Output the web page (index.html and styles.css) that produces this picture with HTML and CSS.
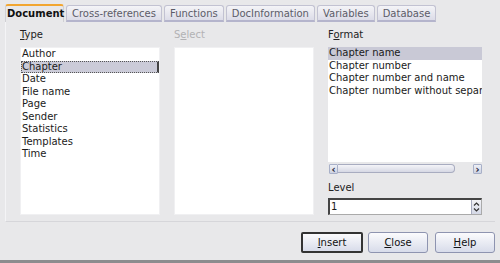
FILE: index.html
```html
<!DOCTYPE html>
<html lang="en">
<head>
    <meta charset="UTF-8">
    <title>Fields</title>
    <link rel="stylesheet" href="styles.css">
</head>
<body>
    <div class="dialog">
        <div class="tabs">
            <div class="tab active">Document</div>
            <div class="tab">Cross-references</div>
            <div class="tab">Functions</div>
            <div class="tab">DocInformation</div>
            <div class="tab">Variables</div>
            <div class="tab">Database</div>
        </div>

        <div class="panel">
            <div class="column">
                <div class="label"><u>T</u>ype</div>
                <ul class="list type-list">
                    <li>Author</li>
                    <li class="focused">Chapter</li>
                    <li>Date</li>
                    <li>File name</li>
                    <li>Page</li>
                    <li>Sender</li>
                    <li>Statistics</li>
                    <li>Templates</li>
                    <li>Time</li>
                </ul>
            </div>

            <div class="column">
                <div class="label disabled">S<u>e</u>lect</div>
                <ul class="list type-list"></ul>
            </div>

            <div class="column">
                <div class="label">F<u>o</u>rmat</div>
                <div class="format-box">
                    <ul class="list format-list">
                        <li class="selected">Chapter name</li>
                        <li>Chapter number</li>
                        <li>Chapter number and name</li>
                        <li>Chapter number without separator</li>
                    </ul>
                    <div class="hscroll">
                        <span class="arrow-btn">&#8249;</span>
                        <span class="thumb"></span>
                        <span class="track-end"></span>
                        <span class="arrow-btn">&#8250;</span>
                    </div>
                </div>
                <div class="label level-label">Level</div>
                <div class="spin">
                    <span class="spin-value">1</span>
                    <span class="spin-btn">
                        <svg width="7" height="12" viewBox="0 0 7 12">
                            <path d="M1 4.5 L3.5 2 L6 4.5" fill="none" stroke="#333" stroke-width="1.2"/>
                            <path d="M1 7.5 L3.5 10 L6 7.5" fill="none" stroke="#333" stroke-width="1.2"/>
                        </svg>
                    </span>
                </div>
            </div>
        </div>

        <div class="buttons">
            <button class="btn default"><u>I</u>nsert</button>
            <button class="btn close"><u>C</u>lose</button>
            <button class="btn"><u>H</u>elp</button>
        </div>
    </div>
</body>
</html>
```

FILE: styles.css
```css
* {
    box-sizing: border-box;
    margin: 0;
    padding: 0;
}

body {
    font-family: "DejaVu Sans", sans-serif;
    font-size: 10px;
    color: #1a1a1a;
    background: #e8e8ea;
}

.dialog {
    width: 500px;
    height: 263px;
    display: flex;
    flex-direction: column;
    background: #e8e8ea;
    border-bottom: 3px solid #8c8c8e;
}

.tabs {
    display: flex;
    gap: 2px;
    padding: 4px 0 0 5px;
    height: 22px;
}

.tab {
    height: 17px;
    margin-top: 1px;
    padding: 0 5px;
    line-height: 16px;
    color: #5c5c68;
    background: linear-gradient(#f4f4f7, #dcdce8);
    border: 1px solid #c2c2d2;
    border-bottom: 2px solid #b4b4cc;
    border-radius: 3px 3px 0 0;
}

.tab.active {
    width: 59px;
    height: 18px;
    margin-top: 0;
    padding: 0 1px;
    font-weight: bold;
    color: #111;
    background: #e8e8ea;
    border: 1px solid #d0d0d4;
    border-top: 2px solid #f2a630;
    border-bottom: none;
}

.panel {
    height: 200px;
    margin: 0 5px;
    padding: 6px 14px 0;
    display: grid;
    grid-template-columns: 140px 140px 154px;
    column-gap: 14px;
    border-left: 1px solid #f4f4f6;
    border-bottom: 1px solid #d6d6da;
}

.column {
    display: flex;
    flex-direction: column;
}

.label {
    height: 13px;
    line-height: 13px;
    margin-bottom: 6px;
    color: #222;
}

.label.disabled {
    color: #b2b2b4;
}

.list {
    list-style: none;
    background: #fff;
    border: 1px solid #f0f0f2;
}

.type-list {
    height: 168px;
}

.list li {
    height: 12.5px;
    line-height: 12.5px;
    padding-left: 1px;
    white-space: nowrap;
    overflow: hidden;
}

.list li.focused {
    background: #cbcbd8;
    border: 1px dotted #555;
    border-right: 2px solid #444;
    padding-left: 0;
    line-height: 10.5px;
}

.list li.selected {
    background: #c9c9d6;
}

.format-box {
    height: 128px;
    display: flex;
    flex-direction: column;
    background: #fff;
}

.format-list {
    flex: 1;
    border: none;
}

.hscroll {
    height: 13px;
    display: flex;
    align-items: center;
    background: #e8e8ea;
    padding: 1px 0 1px 1px;
}

.arrow-btn {
    width: 9px;
    height: 10px;
    line-height: 9px;
    font-size: 10px;
    font-weight: bold;
    text-align: center;
    color: #223;
    background: linear-gradient(#eef0f6, #ccd2e2);
    border: 1px solid #a8b0c8;
    border-radius: 1px;
}

.thumb {
    width: 117px;
    height: 9px;
    background: linear-gradient(#f4f4f8, #d6d8e4);
    border: 1px solid #a8acc0;
    border-left: none;
    border-radius: 0 4px 4px 0;
}

.track-end {
    flex: 1;
}

.level-label {
    margin-top: 6px;
    margin-bottom: 4px;
}

.spin {
    height: 17px;
    display: flex;
    background: #fff;
    border: 1px solid #aaa;
    border-top: 2px solid #444;
    border-left: 2px solid #444;
}

.spin-value {
    flex: 1;
    line-height: 14px;
    padding-left: 1px;
}

.spin-btn {
    width: 10px;
    display: flex;
    align-items: center;
    justify-content: center;
    background: linear-gradient(#f2f2f6, #d4d8e6);
    border-left: 1px solid #a8acc0;
}

.buttons {
    display: flex;
    justify-content: flex-end;
    gap: 5px;
    padding: 10px 5px 0 0;
}

.btn {
    width: 60px;
    height: 21px;
    font-family: "DejaVu Sans", sans-serif;
    font-size: 10px;
    color: #111;
    background: linear-gradient(#fbfbfd, #d8dcea);
    border: 1px solid #8e94b0;
    border-radius: 3px;
}

.btn.close {
    margin-right: 2px;
}

.btn.default {
    width: 62px;
    border: 2px solid #333;
    border-radius: 2px;
}
```
